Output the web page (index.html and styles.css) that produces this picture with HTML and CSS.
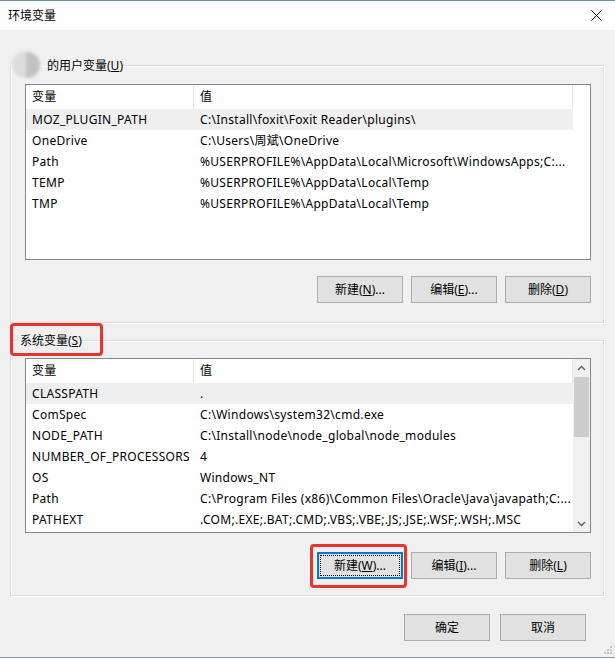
FILE: index.html
```html
<!DOCTYPE html>
<html lang="zh-CN">
<head>
<meta charset="utf-8">
<title>环境变量</title>
<link rel="stylesheet" href="styles.css">
</head>
<body>
<div class="window">
  <div class="titlebar">
    <span class="title">环境变量</span>
    <svg class="close" width="11" height="11" viewBox="0 0 11 11"><path d="M0.5 0.5 L10.5 10.5 M10.5 0.5 L0.5 10.5" stroke="#000" stroke-width="1"/></svg>
  </div>
  <div class="content">
    <fieldset class="group group-user">
      <legend class="legend legend-user"><span class="avatar"></span><span class="legend-text">的用户变量(<u>U</u>)</span></legend>
      <div class="list list-user">
        <div class="table">
          <div class="row head"><div class="c">变量</div><div class="c">值</div></div>
          <div class="row sel"><div class="c">MOZ_PLUGIN_PATH</div><div class="c">C:\Install\foxit\Foxit Reader\plugins\</div></div>
          <div class="row"><div class="c">OneDrive</div><div class="c">C:\Users\周斌\OneDrive</div></div>
          <div class="row"><div class="c">Path</div><div class="c">%USERPROFILE%\AppData\Local\Microsoft\WindowsApps;C:...</div></div>
          <div class="row"><div class="c">TEMP</div><div class="c">%USERPROFILE%\AppData\Local\Temp</div></div>
          <div class="row"><div class="c">TMP</div><div class="c">%USERPROFILE%\AppData\Local\Temp</div></div>
        </div>
      </div>
      <div class="btns">
        <button class="btn">新建(<u>N</u>)...</button>
        <button class="btn">编辑(<u>E</u>)...</button>
        <button class="btn">删除(<u>D</u>)</button>
      </div>
    </fieldset>

    <fieldset class="group group-sys">
      <legend class="legend legend-sys"><span class="legend-text">系统变量(<u>S</u>)</span></legend>
      <div class="list list-sys">
        <div class="table">
          <div class="row head"><div class="c">变量</div><div class="c">值</div></div>
          <div class="row sel"><div class="c">CLASSPATH</div><div class="c">.</div></div>
          <div class="row"><div class="c">ComSpec</div><div class="c">C:\Windows\system32\cmd.exe</div></div>
          <div class="row"><div class="c">NODE_PATH</div><div class="c">C:\Install\node\node_global\node_modules</div></div>
          <div class="row"><div class="c">NUMBER_OF_PROCESSORS</div><div class="c">4</div></div>
          <div class="row"><div class="c">OS</div><div class="c">Windows_NT</div></div>
          <div class="row"><div class="c">Path</div><div class="c">C:\Program Files (x86)\Common Files\Oracle\Java\javapath;C:...</div></div>
          <div class="row"><div class="c">PATHEXT</div><div class="c">.COM;.EXE;.BAT;.CMD;.VBS;.VBE;.JS;.JSE;.WSF;.WSH;.MSC</div></div>
        </div>
        <div class="scrollbar">
          <div class="arrow"><svg width="9" height="6" viewBox="0 0 9 6"><path d="M1 5 L4.5 1.5 L8 5" fill="none" stroke="#606060" stroke-width="1.4"/></svg></div>
          <div class="track"><div class="thumb"></div></div>
          <div class="arrow"><svg width="9" height="6" viewBox="0 0 9 6"><path d="M1 1 L4.5 4.5 L8 1" fill="none" stroke="#606060" stroke-width="1.4"/></svg></div>
        </div>
      </div>
      <div class="btns">
        <button class="btn focused">新建(<u>W</u>)...</button>
        <button class="btn">编辑(<u>I</u>)...</button>
        <button class="btn">删除(<u>L</u>)</button>
      </div>
    </fieldset>

    <div class="dialog-btns">
      <button class="btn">确定</button>
      <button class="btn">取消</button>
    </div>
  </div>

  <div class="mark mark-label"></div>
  <div class="mark mark-btn"></div>
  <svg class="grip" width="10" height="10" viewBox="0 0 10 10">
    <rect x="8" y="2" width="2" height="2" fill="#c4c4c4"/>
    <rect x="5" y="5" width="2" height="2" fill="#c4c4c4"/>
    <rect x="8" y="5" width="2" height="2" fill="#c4c4c4"/>
    <rect x="2" y="8" width="2" height="2" fill="#c4c4c4"/>
    <rect x="5" y="8" width="2" height="2" fill="#c4c4c4"/>
    <rect x="8" y="8" width="2" height="2" fill="#c4c4c4"/>
  </svg>
</div>
</body>
</html>
```

FILE: styles.css
```css
* { box-sizing: border-box; }

html, body {
  margin: 0;
  padding: 0;
  background: #ffffff;
}

body {
  font-family: "Noto Sans", "Noto Sans CJK SC", sans-serif;
  font-size: 12px;
  color: #000;
}

.window {
  position: relative;
  width: 615px;
  height: 658px;
  background: #f0f0f0;
  border-top: 1px solid #5f96ae;
  border-bottom: 1px solid #7d97ad;
  overflow: hidden;
}

.titlebar {
  height: 29px;
  background: #ffffff;
  display: flex;
  align-items: center;
  justify-content: space-between;
  padding: 0 13px 0 8px;
}

.title {
  font-size: 12px;
  line-height: 16px;
}

.close { display: block; }

.content {
  padding-top: 22px;
}

.group {
  margin: 0 0 0 10px;
  padding: 0;
  width: 594px;
  min-width: 0;
  border: 1px solid #dcdcdc;
  box-shadow: inset 1px 1px 0 #ffffff, 1px 1px 0 #ffffff;
}

.legend {
  padding: 0 2px;
  margin: 0;
  line-height: 18px;
}

.legend-text {
  position: relative;
  top: 1px;
}

.legend-user {
  display: flex;
  align-items: center;
  height: 26px;
  padding-left: 1px;
  gap: 7px;
}

.avatar {
  display: block;
  width: 28px;
  height: 26px;
  border-radius: 13px;
  background: linear-gradient(90deg, #dcdcdc 0 50%, #c2c2c2 50% 100%);
  filter: blur(1.5px);
}

.legend-sys {
  margin-left: 7px;
  height: 18px;
}

.group-sys {
  margin-top: 8px;
}

.list {
  margin-left: 14px;
  width: 566px;
  border: 1px solid #828790;
  background: #ffffff;
  display: flex;
}

.list-user {
  margin-top: 6px;
  height: 176px;
}

.list-sys {
  margin-top: 9px;
  height: 175px;
}

.table {
  width: 547px;
  overflow: hidden;
}

.row {
  display: grid;
  grid-template-columns: 168px 379px;
  height: 21px;
  line-height: 20px;
  white-space: nowrap;
  letter-spacing: 0.3px;
}

.row .c {
  padding: 1px 0 0 6px;
  overflow: hidden;
}

.row.head {
  height: 24px;
  line-height: 22px;
}

.row.head .c {
  border-right: 1px solid #e5e5e5;
}

.row.sel {
  background: #efefef;
}

.scrollbar {
  width: 17px;
  background: #f0f0f0;
  display: flex;
  flex-direction: column;
}

.arrow {
  height: 17px;
  display: flex;
  align-items: center;
  justify-content: center;
}

.arrow svg { display: block; }

.track {
  flex: 1;
  padding: 1px 1px 0 1px;
}

.thumb {
  height: 60px;
  background: #cdcdcd;
}

.btns {
  display: flex;
  justify-content: flex-end;
  gap: 8px;
  margin: 16px 12px 0 0;
  padding-bottom: 19px;
}

.group-sys .btns {
  margin-top: 19px;
  padding-bottom: 16px;
}

.btn {
  position: relative;
  width: 86px;
  height: 27px;
  padding: 0;
  font-family: "Noto Sans", "Noto Sans CJK SC", sans-serif;
  font-size: 12px;
  color: #000;
  background: #e1e1e1;
  border: 1px solid #adadad;
  border-radius: 0;
  line-height: 18px;
}

.btn.focused {
  border: 2px solid #0078d7;
}

.btn.focused::after {
  content: "";
  position: absolute;
  left: 1px;
  top: 1px;
  right: 1px;
  bottom: 1px;
  border: 1px dotted #000;
}

.dialog-btns {
  display: flex;
  justify-content: flex-end;
  gap: 10px;
  margin: 18px 29px 0 0;
}

.mark {
  position: absolute;
  border: 3px solid #e5352c;
  border-radius: 4px;
}

.mark-label {
  left: 10px;
  top: 322px;
  width: 93px;
  height: 33px;
}

.mark-btn {
  left: 310px;
  top: 543px;
  width: 97px;
  height: 44px;
}

.grip {
  position: absolute;
  right: 3px;
  bottom: 3px;
}
```
